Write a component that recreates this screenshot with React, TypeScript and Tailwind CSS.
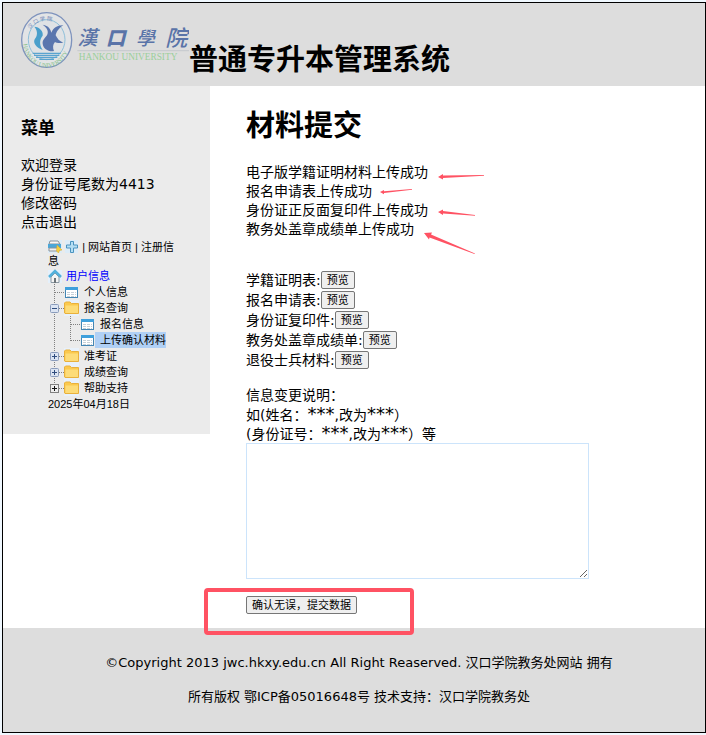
import React from "react";

const menuItems = ["欢迎登录", "身份证号尾数为4413", "修改密码", "点击退出"];

const statusLines = [
  "电子版学籍证明材料上传成功",
  "报名申请表上传成功",
  "身份证正反面复印件上传成功",
  "教务处盖章成绩单上传成功",
];

const previews = ["学籍证明表", "报名申请表", "身份证复印件", "教务处盖章成绩单", "退役士兵材料"];

function Logo() {
  return (
    <svg viewBox="63 36 504 168" className="h-14 w-[168px] shrink-0" role="img" aria-label="汉口学院">
      <ellipse cx="140" cy="120" rx="75" ry="82" fill="#e2e4e6" stroke="#7e93bd" strokeWidth="4" />
      <ellipse cx="140" cy="119" rx="55" ry="60" fill="#dfe2e5" stroke="#8fc0da" strokeWidth="3" />
      <path d="M103 80C118 80 131 94 128 107C120 116 116 132 128 150C110 144 98 130 104 118C112 108 115 94 103 80Z" fill="#4a9fcb" />
      <path d="M128 74C146 76 153 90 154 98C160 84 172 75 190 76C176 84 168 98 167 106C172 116 178 124 190 128C178 130 170 129 165 126C158 134 158 144 162 153C146 156 130 147 128 131C126 118 142 110 143 100C145 90 139 82 128 74Z" fill="#5a76ae" />
      <path d="M98 160H182M102 166H178M108 172H172M118 178H162" stroke="#5aa3cf" strokeWidth="4" />
      <defs>
        <path id="sealTop" d="M80 112A62 68 0 0 1 200 112" />
        <path id="sealBottom" d="M70 126A70 76 0 0 0 210 126" />
      </defs>
      <text fontFamily="Noto Sans CJK SC" fontSize="16" fill="#7288b8">
        <textPath href="#sealTop" startOffset="26">汉  口  学  院</textPath>
      </text>
      <text fontFamily="Liberation Serif" fontSize="18" fill="#80c084">
        <textPath href="#sealBottom" startOffset="6">HANKOU UNIVERSITY</textPath>
      </text>
      <g fontFamily="Noto Sans CJK TC, sans-serif" fill="#5a74a8" fontWeight="500" fontStyle="italic">
        <text x="232" y="136" fontSize="60">漢</text>
        <text x="318" y="134" fontSize="58" fontWeight="900">口</text>
        <text x="408" y="134" fontSize="56">學</text>
        <text x="496" y="137" fontSize="66">院</text>
      </g>
      <path d="M232 152H567" stroke="#b9bec6" strokeWidth="2" />
      <text x="236" y="180" fontFamily="Liberation Serif" fontSize="28" fill="#9bcf9b">HANKOU UNIVERSITY</text>
    </svg>
  );
}

function Branch({ kind }: { kind: "line" | "tee" | "end" | "minus" | "plus" | "plusEnd" }) {
  const square = kind === "plusEnd";
  const box = kind === "minus" || kind === "plus" || square;
  return (
    <svg viewBox="0 0 16 16" className="size-4 shrink-0" aria-hidden="true">
      <path d={kind === "end" || square ? "M6.5 0V9" : "M6.5 0V16"} stroke="#808080" strokeDasharray="1 1" />
      {kind !== "line" && <path d="M7 8.5H16" stroke="#808080" strokeDasharray="1 1" />}
      {box && (
        <>
          <rect x="2.5" y="4.5" width="8" height="8" rx={square ? 0 : 1} fill={square ? "#eee" : "#dbe4f2"} stroke={square ? "#808080" : "#8a9cbc"} />
          <path d={kind === "minus" ? "M4 8.5H9" : "M4 8.5H9M6.5 6V11"} stroke={square ? "#111" : "#2f4c7d"} />
        </>
      )}
    </svg>
  );
}

function FolderIcon() {
  return (
    <svg viewBox="0 0 16 16" className="size-4 shrink-0" aria-hidden="true">
      <path d="M0 0H15V16H0Z" fill="#e8f1fb" />
      <path d="M.5 13V3L1.500 2H6L7.500 3.500H14.500V13.500H1Z" fill="#fbc94e" stroke="#e9b13c" />
      <path d="M1.500 5.500H14V13H1.500Z" fill="#fddc78" />
    </svg>
  );
}

function PageIcon() {
  return (
    <svg viewBox="0 0 16 16" className="size-4 shrink-0" aria-hidden="true">
      <rect x="1.500" y="3.500" width="12" height="10" fill="#fff" stroke="#4486b4" />
      <path d="M1 3H14V6H1Z" fill="#3fa0dc" />
      <path d="M3 8.500H12M3 10.500H12M3 12.500H12" stroke="#c6d0d8" strokeDasharray="3 1" />
    </svg>
  );
}

function HomeIcon() {
  return (
    <svg viewBox="0 0 16 16" className="size-4 shrink-0" aria-hidden="true">
      <path d="M0 2H14V15H0Z" fill="#e4f0fb" />
      <path d="M3 9L7 5L11 9V14.500H3Z" fill="#f4f4f4" stroke="#8b98a2" />
      <path d="M1 9L7 3L13 9" fill="none" stroke="#53b1dc" strokeWidth="2.500" />
      <path d="M6 10H8V15H6Z" fill="#6c7479" />
    </svg>
  );
}

function TreeLink({ children, active = false }: { children: React.ReactNode; active?: boolean }) {
  return (
    <a href="#" className={active ? "-ml-px bg-[#b0d0f5] pl-[5px] leading-4" : "pl-1 leading-4"}>
      {children}
    </a>
  );
}

function Sidebar() {
  return (
    <aside className="w-[207px] shrink-0 self-start bg-[#ebebeb] px-[18px] pt-8 pb-[22px]">
      <h2 className="text-[17px] leading-5 font-bold">菜单</h2>
      <ul className="mt-[18px]">
        {menuItems.map((item) => (
          <li key={item}>
            <a href="#">{item}</a>
          </li>
        ))}
      </ul>
      <nav className="mt-2 pr-4 pl-[27px] font-['Liberation_Sans','Noto_Sans_CJK_SC',sans-serif] text-[11px] leading-[14px]">
        <p>
          <svg viewBox="0 0 14 14" className="inline-block size-3.5 align-top" aria-hidden="true">
            <path d="M0 0H14V13H0Z" fill="#dcecf8" />
            <path d="M2 1H10L12 4H1Z" fill="#f8f8f8" stroke="#8b9298" />
            <path d="M0 4H13V8H0Z" fill="#4ba7d8" />
            <path d="M1 8H11V11H1Z" fill="#f1f1f1" stroke="#8b9298" />
            <path d="M9 5L14 10L11.500 10.500L10.500 13L8.500 11Z" fill="#f7cf3f" stroke="#d3a62b" strokeWidth=".5" />
          </svg>{" "}
          <svg viewBox="0 0 14 14" className="inline-block size-3.5 align-top" aria-hidden="true">
            <path d="M0 0H13V13H0Z" fill="#dcecf8" />
            <path d="M5.500 1.500H8.500V5H12.500V8H8.500V12.500H5.500V8H1.500V5H5.500Z" fill="#b5def3" stroke="#4a93bf" />
          </svg>{" "}
          | <a href="#">网站首页</a> | <a href="#">注册信息</a>
        </p>
        <div className="flex">
          <HomeIcon />
          <a href="#" className="pl-0.5 leading-4 text-[#0000ff]">
            用户信息
          </a>
        </div>
        <div className="flex">
          <Branch kind="tee" />
          <PageIcon />
          <TreeLink>个人信息</TreeLink>
        </div>
        <div className="flex">
          <Branch kind="minus" />
          <FolderIcon />
          <TreeLink>报名查询</TreeLink>
        </div>
        <div className="flex">
          <Branch kind="line" />
          <Branch kind="tee" />
          <PageIcon />
          <TreeLink>报名信息</TreeLink>
        </div>
        <div className="flex">
          <Branch kind="line" />
          <Branch kind="end" />
          <PageIcon />
          <TreeLink active>上传确认材料</TreeLink>
        </div>
        <div className="flex">
          <Branch kind="plus" />
          <FolderIcon />
          <TreeLink>准考证</TreeLink>
        </div>
        <div className="flex">
          <Branch kind="plus" />
          <FolderIcon />
          <TreeLink>成绩查询</TreeLink>
        </div>
        <div className="flex">
          <Branch kind="plusEnd" />
          <FolderIcon />
          <TreeLink>帮助支持</TreeLink>
        </div>
        <p className="leading-4">2025年04月18日</p>
      </nav>
    </aside>
  );
}

function Arrows() {
  return (
    <svg viewBox="0 0 250 100" className="pointer-events-none absolute top-0 left-0 h-[100px] w-[250px]" fill="#ff5263" aria-hidden="true">
      <path d="M192 14L197 11V12.500L238 12V12.800L197 15V16.500Z" />
      <path d="M134 29L138 27V28.300L166 26V26.700L138 30V31.300Z" />
      <path d="M192 49L197 46.500V48L229 52V52.800L197 50.500V52Z" />
      <path d="M178 70L186 69.500L185 71.500L229 90.500L228.500 91L183.500 74.500L183 76.500Z" />
    </svg>
  );
}

function Mask() {
  return <span className="text-lg leading-none">***</span>;
}

const buttonStyle =
  "rounded-[2px] border border-[#767676] bg-[#efefef] px-[5px] font-['Liberation_Sans','Noto_Sans_CJK_SC',sans-serif] text-[11px]";

export default function App() {
  return (
    <div className="bg-[#f0f8ff] py-0.5 pl-0.5 font-['DejaVu_Sans','Noto_Sans_CJK_SC',sans-serif] text-sm leading-[19px] text-black">
      <div className="border border-black bg-white">
        <header className="flex items-start bg-[#dddddd] pt-[9px] pb-[18px] pl-[18px]">
          <Logo />
          <h1 className="mt-7 -mb-3 text-[29px] leading-10 font-bold whitespace-nowrap">普通专升本管理系统</h1>
        </header>

        <div className="flex">
          <Sidebar />
          <main className="min-w-0 flex-1 pt-5 pr-9 pb-3.5 pl-9">
            <h1 className="text-[29px] leading-10 font-bold">材料提交</h1>
            <div className="relative mt-[17px]">
              {statusLines.map((line) => (
                <p key={line}>{line}</p>
              ))}
              <Arrows />
            </div>
            <div className="mt-[31px]">
              {previews.map((name) => (
                <div key={name} className="flex h-5 items-center">
                  <span>{name}:</span>
                  <button type="button" aria-label={`预览 ${name}`} className={`${buttonStyle} h-[18px] leading-4`}>
                    预览
                  </button>
                </div>
              ))}
            </div>
            <form className="mt-4" onSubmit={(event) => event.preventDefault()}>
              <label htmlFor="changes" className="block">
                <span className="block h-[19px]">信息变更说明：</span>
                <span className="block h-[19px]">
                  如(姓名：
                  <Mask />
                  ,改为
                  <Mask />）
                </span>
                <span className="block h-[19px]">
                  (身份证号：
                  <Mask />
                  ,改为
                  <Mask />）等
                </span>
              </label>
              <textarea id="changes" className="block h-[136px] w-[343px] max-w-full border border-[#cce4fb] bg-white" />
              <div className="relative mt-[17px] flex">
                <button type="submit" className={`${buttonStyle} h-[18px] leading-4`}>
                  确认无误，提交数据
                </button>
                <div className="pointer-events-none absolute -top-2 -left-[42px] h-[47px] w-[210px] rounded border-4 border-[#ff5263]" />
              </div>
            </form>
          </main>
        </div>

        <footer className="bg-[#dddddd] py-[25px] pr-2 pl-[18px] text-center text-[13px] leading-5">
          <p>©Copyright 2013 jwc.hkxy.edu.cn All Right Reaserved. 汉口学院教务处网站 拥有</p>
          <p className="mt-3.5">所有版权 鄂ICP备05016648号 技术支持：汉口学院教务处</p>
        </footer>
      </div>
    </div>
  );
}
